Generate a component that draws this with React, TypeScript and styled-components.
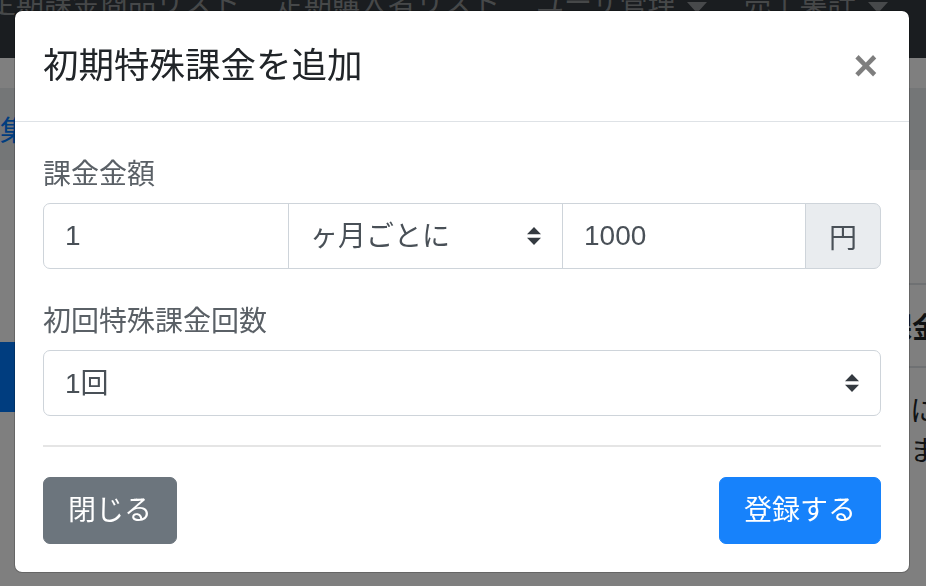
import React from "react";
import styled, { createGlobalStyle } from "styled-components";

const GlobalStyle = createGlobalStyle`
  html, body {
    margin: 0;
    padding: 0;
    width: 926px;
    height: 586px;
    overflow: hidden;
    background: #ffffff;
  }
  body {
    font-family: "Liberation Sans", "Noto Sans CJK JP", sans-serif;
    font-size: 28px;
    color: #212529;
  }
  * { box-sizing: border-box; }
`;

/* ---------- background page ---------- */

const Page = styled.div`
  width: 926px;
  height: 586px;
  overflow: hidden;
  display: flex;
  flex-direction: column;
`;

const Navbar = styled.nav`
  height: 58px;
  flex: 0 0 58px;
  background: #343a40;
  display: flex;
  align-items: flex-start;
  gap: 36px;
  margin-left: -12px;
  width: 960px;
  overflow: hidden;
`;

const NavItem = styled.span`
  margin-top: -10px;
  font-size: 28px;
  line-height: 28px;
  color: rgba(255, 255, 255, 0.45);
  white-space: nowrap;
  display: flex;
  align-items: center;
  gap: 12px;
`;

const Caret = styled.span`
  display: inline-block;
  width: 0;
  height: 0;
  margin-top: 6px;
  border-left: 10px solid transparent;
  border-right: 10px solid transparent;
  border-top: 11px solid rgba(255, 255, 255, 0.45);
`;

const Breadcrumb = styled.div`
  margin-top: 30px;
  height: 82px;
  flex: 0 0 82px;
  background: #e9ecef;
  display: flex;
  align-items: center;
  font-size: 28px;
  color: #007bff;
  white-space: nowrap;
`;

const Content = styled.div`
  display: flex;
  flex: 1;
`;

const Sidebar = styled.div`
  width: 300px;
  flex: 0 0 300px;
  padding-top: 172px;
`;

const SideButton = styled.div`
  height: 70px;
  width: 240px;
  background: #007bff;
`;

const TableArea = styled.div`
  flex: 1;
  padding-top: 113px;
`;

const HeadRow = styled.div`
  height: 85px;
  border-top: 2px solid #dee2e6;
  border-bottom: 2px solid #dee2e6;
  display: flex;
  justify-content: flex-end;
  align-items: center;
  font-weight: 700;
  white-space: nowrap;
  margin-right: -14px;
`;

const BodyRow = styled.div`
  padding-top: 24px;
  display: flex;
  flex-direction: column;
  align-items: flex-end;
  line-height: 40px;
  margin-right: -12px;
  white-space: nowrap;
`;

/* ---------- modal ---------- */

const Backdrop = styled.div`
  position: fixed;
  inset: 0;
  background: rgba(0, 0, 0, 0.5);
`;

const ModalLayer = styled.div`
  position: fixed;
  inset: 0;
  padding: 10px 0 0 14px;
`;

const Modal = styled.div`
  width: 896px;
  background: #ffffff;
  border: 1px solid rgba(0, 0, 0, 0.2);
  border-radius: 8px;
  background-clip: padding-box;
  display: flex;
  flex-direction: column;
`;

const Header = styled.div`
  display: flex;
  align-items: center;
  justify-content: space-between;
  padding: 28px 28px;
  border-bottom: 1px solid #dee2e6;
`;

const Title = styled.h5`
  margin: 0;
  padding-left: 0;
  font-size: 35.5px;
  line-height: 54px;
  font-weight: 400;
  color: #212529;
`;

const CloseButton = styled.button`
  border: 0;
  background: transparent;
  padding: 0;
  margin: 0 3px 0 0;
  font-family: "Liberation Sans", "DejaVu Sans", sans-serif;
  font-size: 42px;
  line-height: 42px;
  font-weight: 700;
  color: #000;
  opacity: 0.5;
  cursor: pointer;
`;

const Body = styled.div`
  padding: 28px;
`;

const FormGroup = styled.div<{ $last?: boolean }>`
  margin-bottom: ${(p) => (p.$last ? "0" : "28px")};
`;

const Label = styled.label`
  display: block;
  padding-top: 9px;
  line-height: 31px;
  margin-bottom: 13px;
  font-size: 28px;
  color: #5a6066;
`;

const InputGroup = styled.div`
  display: flex;
  height: 66px;
`;

const TextInput = styled.input<{ $basis?: number; $first?: boolean }>`
  flex: ${(p) => (p.$basis ? `0 0 ${p.$basis}px` : "1 1 auto")};
  min-width: 0;
  height: 100%;
  margin: 0 0 0 ${(p) => (p.$first ? "0" : "-1px")};
  padding: 0 21px;
  border: 1px solid #ced4da;
  border-radius: ${(p) => (p.$first ? "7px 0 0 7px" : "0")};
  font-family: "Liberation Sans", "Noto Sans CJK JP", sans-serif;
  font-size: 28px;
  color: #495057;
  background: #fff;
  outline: none;
`;

const SelectWrap = styled.div<{ $basis?: number; $full?: boolean }>`
  position: relative;
  flex: ${(p) => (p.$basis ? `0 0 ${p.$basis}px` : "1 1 auto")};
  height: 100%;
  margin-left: ${(p) => (p.$full ? "0" : "-1px")};
  border: 1px solid #ced4da;
  border-radius: ${(p) => (p.$full ? "7px" : "0")};
  background: #fff;
`;

const Select = styled.select`
  appearance: none;
  -webkit-appearance: none;
  width: 100%;
  height: 100%;
  border: 0;
  background: transparent;
  padding: 0 56px 0 21px;
  font-family: "Liberation Sans", "Noto Sans CJK JP", sans-serif;
  font-size: 28px;
  color: #495057;
  outline: none;
`;

const Arrows = styled.svg`
  position: absolute;
  right: 21px;
  top: 50%;
  width: 14px;
  height: 18px;
  transform: translateY(-50%);
  pointer-events: none;
`;

const Addon = styled.div`
  display: flex;
  align-items: center;
  margin-left: -1px;
  padding: 0 23px;
  background: #e9ecef;
  border: 1px solid #ced4da;
  border-radius: 0 7px 7px 0;
  font-size: 28px;
  color: #495057;
`;

const Divider = styled.hr`
  margin: 29px 0 30px;
  border: 0;
  border-top: 2px solid rgba(0, 0, 0, 0.1);
  height: 0;
`;

const Footer = styled.div`
  display: flex;
  justify-content: space-between;
`;

const Button = styled.button<{ $variant: "secondary" | "primary" }>`
  height: 67px;
  padding: 0 24px;
  border: 1px solid ${(p) => (p.$variant === "primary" ? "#1782fb" : "#6c757d")};
  border-radius: 7px;
  background: ${(p) => (p.$variant === "primary" ? "#1782fb" : "#6c757d")};
  color: #fff;
  font-family: "Liberation Sans", "Noto Sans CJK JP", sans-serif;
  font-size: 28px;
  line-height: 42px;
  cursor: pointer;
`;

const SelectArrows = () => (
  <Arrows viewBox="0 0 4 5" preserveAspectRatio="none">
    <path fill="#343a40" d="M2 0L0 2h4zm0 5L0 3h4z" />
  </Arrows>
);

export default function App() {
  return (
    <>
      <GlobalStyle />
      <Page>
        <Navbar>
          <NavItem>定期課金商品リスト</NavItem>
          <NavItem>定期購入者リスト</NavItem>
          <NavItem>
            ユーザ管理 <Caret />
          </NavItem>
          <NavItem>
            売上集計 <Caret />
          </NavItem>
          <NavItem>ス</NavItem>
        </Navbar>
        <Breadcrumb>集計</Breadcrumb>
        <Content>
          <Sidebar>
            <SideButton />
          </Sidebar>
          <TableArea>
            <HeadRow>課金</HeadRow>
            <BodyRow>
              <span>毎月に</span>
              <span>決済しま</span>
            </BodyRow>
          </TableArea>
        </Content>
      </Page>
      <Backdrop />
      <ModalLayer>
        <Modal role="dialog">
          <Header>
            <Title>初期特殊課金を追加</Title>
            <CloseButton type="button" aria-label="Close">
              ×
            </CloseButton>
          </Header>
          <Body>
            <FormGroup>
              <Label>課金金額</Label>
              <InputGroup>
                <TextInput $first $basis={246} defaultValue="1" />
                <SelectWrap $basis={275}>
                  <Select defaultValue="month">
                    <option value="month">ヶ月ごとに</option>
                  </Select>
                  <SelectArrows />
                </SelectWrap>
                <TextInput defaultValue="1000" />
                <Addon>円</Addon>
              </InputGroup>
            </FormGroup>
            <FormGroup $last>
              <Label>初回特殊課金回数</Label>
              <InputGroup>
                <SelectWrap $full>
                  <Select defaultValue="1">
                    <option value="1">1回</option>
                  </Select>
                  <SelectArrows />
                </SelectWrap>
              </InputGroup>
            </FormGroup>
            <Divider />
            <Footer>
              <Button $variant="secondary" type="button">
                閉じる
              </Button>
              <Button $variant="primary" type="button">
                登録する
              </Button>
            </Footer>
          </Body>
        </Modal>
      </ModalLayer>
    </>
  );
}
